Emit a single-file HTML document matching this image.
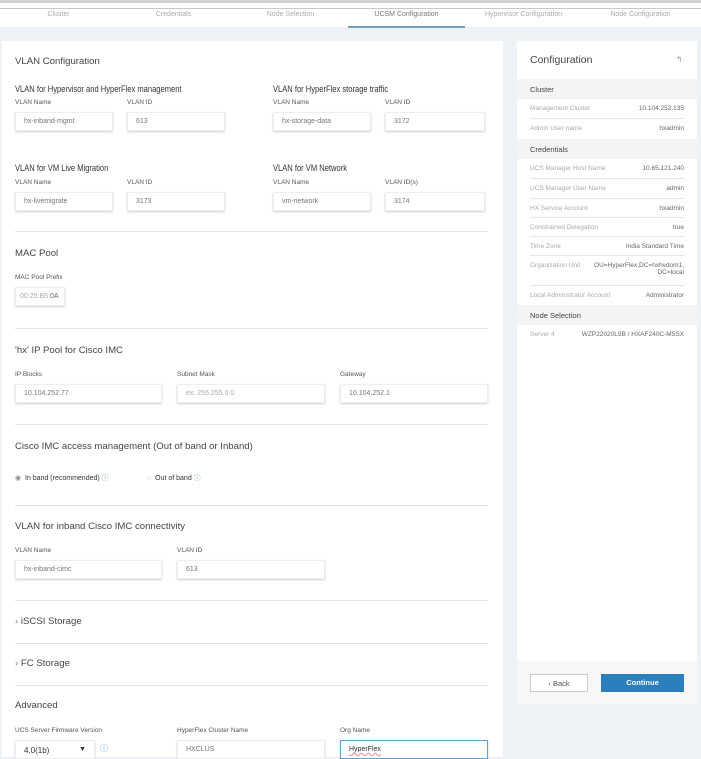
<!DOCTYPE html>
<html><head><meta charset="utf-8"><style>
*{box-sizing:border-box;margin:0;padding:0}
body{width:701px;height:757px;overflow:hidden;background:#eef2f6;font-family:"Liberation Sans",sans-serif;position:relative;color:#333}
.a{position:absolute}
.nav{left:0;top:0;width:701px;height:27px;background:#fff;border-top:3px solid #d0d0d0}
.nav:before{content:"";position:absolute;left:0;top:5px;width:701px;height:1px;background:#c8c8c8}
.tab{top:11px;font-size:7px;color:#aaa;text-align:center;width:117px}
.h{font-size:9.6px;color:#444}
.sh{font-size:8.8px;color:#333;transform:scaleX(.86);transform-origin:left}
.lb{font-size:6.5px;color:#555}
.in{height:19px;background:#fff;box-shadow:0 1px 2px rgba(0,0,0,.18);border:1px solid #eee;font-size:7px;color:#777;padding:5px 8px}
.dv{left:15px;width:473px;height:1px;background:#e3e3e3}
.rp{font-size:6.5px;color:#aaa;left:530px;width:154px;border-bottom:1px solid #e6e6e6}
.rp span{float:right;color:#666}
.sec{left:517px;width:180px;height:20px;background:#f3f4f5;font-size:7.5px;color:#444;padding:6px 13px}
</style></head><body>
<div class="a nav"></div>
<div class="a tab" style="left:0">Cluster</div>
<div class="a tab" style="left:115px">Credentials</div>
<div class="a tab" style="left:232px">Node Selection</div>
<div class="a tab" style="left:348px;color:#777">UCSM Configuration</div>
<div class="a" style="left:348px;top:26px;width:117px;height:2px;background:#6aa3c0"></div>
<div class="a tab" style="left:465px">Hypervisor Configuration</div>
<div class="a tab" style="left:582px">Node Configuration</div>

<div class="a" style="left:2px;top:41px;width:501px;height:716px;background:#fff"></div>
<div class="a h" style="left:15px;top:56px">VLAN Configuration</div>
<div class="a sh" style="left:15px;top:84px">VLAN for Hypervisor and HyperFlex management</div>
<div class="a sh" style="left:273px;top:84px">VLAN for HyperFlex storage traffic</div>
<div class="a lb" style="left:15px;top:99px">VLAN Name</div>
<div class="a lb" style="left:127px;top:99px">VLAN ID</div>
<div class="a lb" style="left:273px;top:99px">VLAN Name</div>
<div class="a lb" style="left:385px;top:99px">VLAN ID</div>
<div class="a in" style="left:15px;top:112px;width:98px">hx-inband-mgmt</div>
<div class="a in" style="left:127px;top:112px;width:98px">613</div>
<div class="a in" style="left:273px;top:112px;width:98px">hx-storage-data</div>
<div class="a in" style="left:385px;top:112px;width:100px">3172</div>

<div class="a sh" style="left:15px;top:163px">VLAN for VM Live Migration</div>
<div class="a sh" style="left:273px;top:163px">VLAN for VM Network</div>
<div class="a lb" style="left:15px;top:179px">VLAN Name</div>
<div class="a lb" style="left:127px;top:179px">VLAN ID</div>
<div class="a lb" style="left:273px;top:179px">VLAN Name</div>
<div class="a lb" style="left:385px;top:179px">VLAN ID(s)</div>
<div class="a in" style="left:15px;top:192px;width:98px">hx-livemigrate</div>
<div class="a in" style="left:127px;top:192px;width:98px">3173</div>
<div class="a in" style="left:273px;top:192px;width:98px">vm-network</div>
<div class="a in" style="left:385px;top:192px;width:100px">3174</div>
<div class="a dv" style="top:231px"></div>

<div class="a h" style="left:15px;top:248px">MAC Pool</div>
<div class="a lb" style="left:15px;top:274px">MAC Pool Prefix</div>
<div class="a in" style="left:15px;top:287px;width:50px;padding-left:4px;color:#aaa">00:25:B5:<span style="color:#666">0A</span></div>
<div class="a dv" style="top:328px"></div>

<div class="a h" style="left:15px;top:345px">'hx' IP Pool for Cisco IMC</div>
<div class="a lb" style="left:15px;top:371px">IP Blocks</div>
<div class="a lb" style="left:177px;top:371px">Subnet Mask</div>
<div class="a lb" style="left:340px;top:371px">Gateway</div>
<div class="a in" style="left:15px;top:384px;width:147px">10.104.252.77</div>
<div class="a in" style="left:177px;top:384px;width:148px;color:#aaa">ex: 255.255.0.0</div>
<div class="a in" style="left:340px;top:384px;width:148px">10.104.252.1</div>
<div class="a dv" style="top:424px"></div>

<div class="a h" style="left:15px;top:441px">Cisco IMC access management (Out of band or Inband)</div>
<div class="a" style="left:15px;top:473px;font-size:7px"><span style="color:#888">◉</span>&nbsp; In band (recommended) <span style="color:#6a9fd0">ⓘ</span></div>
<div class="a" style="left:147px;top:473px;font-size:7px"><span style="color:#bbb">○</span>&nbsp; Out of band <span style="color:#6a9fd0">ⓘ</span></div>
<div class="a dv" style="top:505px"></div>

<div class="a h" style="left:15px;top:521px">VLAN for inband Cisco IMC connectivity</div>
<div class="a lb" style="left:15px;top:547px">VLAN Name</div>
<div class="a lb" style="left:177px;top:547px">VLAN ID</div>
<div class="a in" style="left:15px;top:560px;width:147px">hx-inband-cimc</div>
<div class="a in" style="left:177px;top:560px;width:148px">613</div>
<div class="a dv" style="top:600px"></div>
<div class="a h" style="left:15px;top:616px"><span style="color:#888">›</span> iSCSI Storage</div>
<div class="a dv" style="top:643px"></div>
<div class="a h" style="left:15px;top:658px"><span style="color:#888">›</span> FC Storage</div>
<div class="a dv" style="top:685px"></div>
<div class="a h" style="left:15px;top:700px">Advanced</div>
<div class="a lb" style="left:15px;top:727px">UCS Server Firmware Version</div>
<div class="a lb" style="left:177px;top:727px">HyperFlex Cluster Name</div>
<div class="a lb" style="left:340px;top:727px">Org Name</div>
<div class="a in" style="left:15px;top:740px;width:80px;color:#333;font-size:8px">4.0(1b)<span style="float:right;font-size:7px">▼</span></div>
<div class="a" style="left:100px;top:743px;font-size:8px;color:#6a9fd0">ⓘ</div>
<div class="a in" style="left:177px;top:740px;width:148px">HXCLUS</div>
<div class="a in" style="left:340px;top:740px;width:148px;border:1px solid #5fa3cf;color:#333;text-decoration:underline wavy #e88">HyperFlex</div>

<div class="a" style="left:517px;top:41px;width:180px;height:620px;background:#fff"></div>
<div class="a" style="left:517px;top:661px;width:180px;height:43px;background:#f5f7f9"></div>
<div class="a" style="left:530px;top:54px;font-size:10.5px;color:#444">Configuration</div>
<div class="a" style="left:676px;top:55px;font-size:8px;color:#999">↰</div>
<div class="a sec" style="top:79px">Cluster</div>
<div class="a rp" style="top:99px;height:20px;padding-top:6px">Management Cluster<span>10.104.252.135</span></div>
<div class="a rp" style="top:119px;height:20px;padding-top:6px;border:0">Admin User name<span>hxadmin</span></div>
<div class="a sec" style="top:139px">Credentials</div>
<div class="a rp" style="top:159px;height:20px;padding-top:6px">UCS Manager Host Name<span>10.65.121.240</span></div>
<div class="a rp" style="top:179px;height:20px;padding-top:6px">UCS Manager User Name<span>admin</span></div>
<div class="a rp" style="top:199px;height:19px;padding-top:6px">HX Service Account<span>hxadmin</span></div>
<div class="a rp" style="top:218px;height:19px;padding-top:6px">Constrained Delegation<span>true</span></div>
<div class="a rp" style="top:237px;height:19px;padding-top:6px">Time Zone<span>India Standard Time</span></div>
<div class="a rp" style="top:256px;height:30px;padding-top:6px">Organization Unit<span style="text-align:right">OU=HyperFlex,DC=hxhvdom1,<br>DC=local</span></div>
<div class="a rp" style="top:286px;height:19px;padding-top:6px;border:0">Local Administrator Account<span>Administrator</span></div>
<div class="a sec" style="top:305px">Node Selection</div>
<div class="a rp" style="top:325px;height:20px;padding-top:6px;border:0">Server 4<span>WZP22020L9B / HXAF240C-M5SX</span></div>
<div class="a" style="left:530px;top:674px;width:58px;height:18px;background:#fff;border:1px solid #ccc;font-size:7.5px;color:#555;text-align:center;padding-top:4px">‹ Back</div>
<div class="a" style="left:601px;top:674px;width:83px;height:18px;background:#2b7fbd;font-size:7.5px;color:#fff;text-align:center;padding-top:4px;font-weight:bold">Continue</div>
</body></html>
